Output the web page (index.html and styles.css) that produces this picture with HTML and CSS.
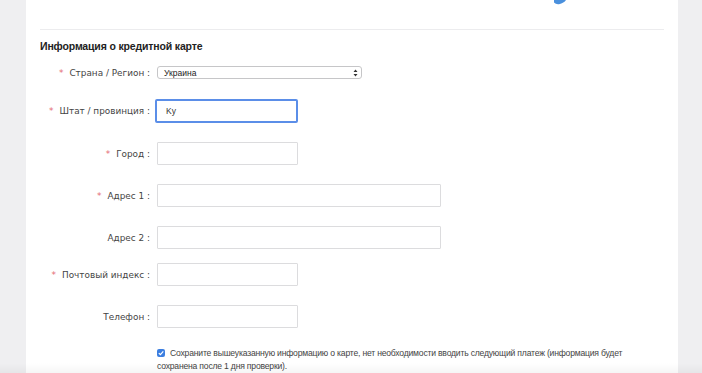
FILE: index.html
```html
<!DOCTYPE html>
<html lang="ru">
<head>
<meta charset="utf-8">
<link rel="stylesheet" href="styles.css">
</head>
<body>
<div class="panel">
  <div class="top">
    <svg class="top-icon" width="14" height="5" viewBox="0 0 14 5"><path d="M1 0 L13 0 Q11 3 6 4.2 Q3 4.6 1 2.6 Z" fill="#4a90dd"/></svg>
  </div>
  <h2 class="title">Информация о кредитной карте</h2>
  <div class="form">
    <div class="row row-select">
      <label class="lbl"><span class="req">*</span>Страна / Регион :</label>
      <div class="select"><span>Украина</span>
        <svg width="5" height="8" viewBox="0 0 5 8"><path d="M0.5 3 L2.5 0.5 L4.5 3 Z M0.5 5 L2.5 7.5 L4.5 5 Z" fill="#333"/></svg>
      </div>
    </div>
    <div class="row">
      <label class="lbl"><span class="req">*</span>Штат / провинция :</label>
      <div class="input focus">Ky</div>
    </div>
    <div class="row">
      <label class="lbl"><span class="req">*</span>Город :</label>
      <div class="input"></div>
    </div>
    <div class="row">
      <label class="lbl"><span class="req">*</span>Адрес 1 :</label>
      <div class="input wide"></div>
    </div>
    <div class="row row-tight">
      <label class="lbl">Адрес 2 :</label>
      <div class="input wide"></div>
    </div>
    <div class="row">
      <label class="lbl"><span class="req">*</span>Почтовый индекс :</label>
      <div class="input"></div>
    </div>
    <div class="row">
      <label class="lbl">Телефон :</label>
      <div class="input"></div>
    </div>
    <div class="save">
      <span class="check"><svg width="8" height="8" viewBox="0 0 8 8"><path d="M1.8 4.1 L3.4 5.6 L6.3 2.4" stroke="#fff" stroke-width="1.2" fill="none"/></svg></span>Сохраните вышеуказанную информацию о карте, нет необходимости вводить следующий платеж (информация будет сохранена после 1 дня проверки).
    </div>
  </div>
  <div class="fade"></div>
</div>
</body>
</html>
```
FILE: styles.css
```css
html, body {
  margin: 0;
  padding: 0;
  height: 100%;
  overflow: hidden;
}
body {
  background: #efeff1;
  font-family: "DejaVu Sans", Verdana, sans-serif;
  color: #333;
}
.panel {
  position: relative;
  margin-left: 26px;
  width: 624px;
  height: 100%;
  background: #fff;
  padding: 0 14px;
}
.top {
  position: relative;
  height: 29px;
  border-bottom: 1px solid #ececee;
}
.top-icon {
  position: absolute;
  left: 513px;
  top: 0;
}
.title {
  margin: 10px 0 0;
  font-family: "Liberation Sans", Arial, sans-serif;
  font-size: 10.5px;
  letter-spacing: -0.15px;
  font-weight: bold;
  line-height: 13px;
  color: #222;
}
.form {
  margin-top: 13px;
}
.row {
  display: flex;
  align-items: center;
  margin-bottom: 19px;
}
.row-select {
  margin-bottom: 20px;
}
.row-tight {
  margin-bottom: 14px;
}
.lbl {
  width: 117px;
  flex: none;
  text-align: right;
  font-size: 8.9px;
  color: #444;
  padding-right: 7px;
  box-sizing: border-box;
  white-space: nowrap;
}
.req {
  color: #e46a74;
  margin-right: 6px;
}
.select {
  width: 205px;
  height: 13px;
  box-sizing: border-box;
  border: 1px solid #c6c6c8;
  border-radius: 3px;
  display: flex;
  align-items: center;
  justify-content: space-between;
  padding: 0 3px 0 6px;
  font-family: "Liberation Sans", Arial, sans-serif;
  font-size: 8.5px;
  color: #222;
}
.input {
  width: 141px;
  height: 23px;
  box-sizing: border-box;
  border: 1px solid #dcdcde;
  border-radius: 1px;
  display: flex;
  align-items: center;
  padding-left: 10px;
  font-family: "Liberation Sans", Arial, sans-serif;
  font-size: 8.5px;
  color: #333;
}
.input.wide {
  width: 284px;
}
.input.focus {
  width: 143px;
  height: 24px;
  margin-left: -2px;
  border: 2px solid #5b8ee8;
  border-radius: 2px;
  padding-left: 9px;
}
.save {
  margin-left: 117px;
  margin-top: 2px;
  width: 482px;
  font-family: "Liberation Sans", Arial, sans-serif;
  font-size: 8.6px;
  letter-spacing: -0.2px;
  line-height: 13px;
  color: #444;
}
.check {
  display: inline-block;
  width: 8px;
  height: 8px;
  background: #3b7ee0;
  border-radius: 2px;
  vertical-align: -1px;
  margin-right: 5px;
  line-height: 0;
}
.fade {
  position: absolute;
  left: -26px;
  right: -24px;
  bottom: 0;
  height: 10px;
  background: linear-gradient(rgba(0,0,0,0), rgba(0,0,0,0.04));
}
```
